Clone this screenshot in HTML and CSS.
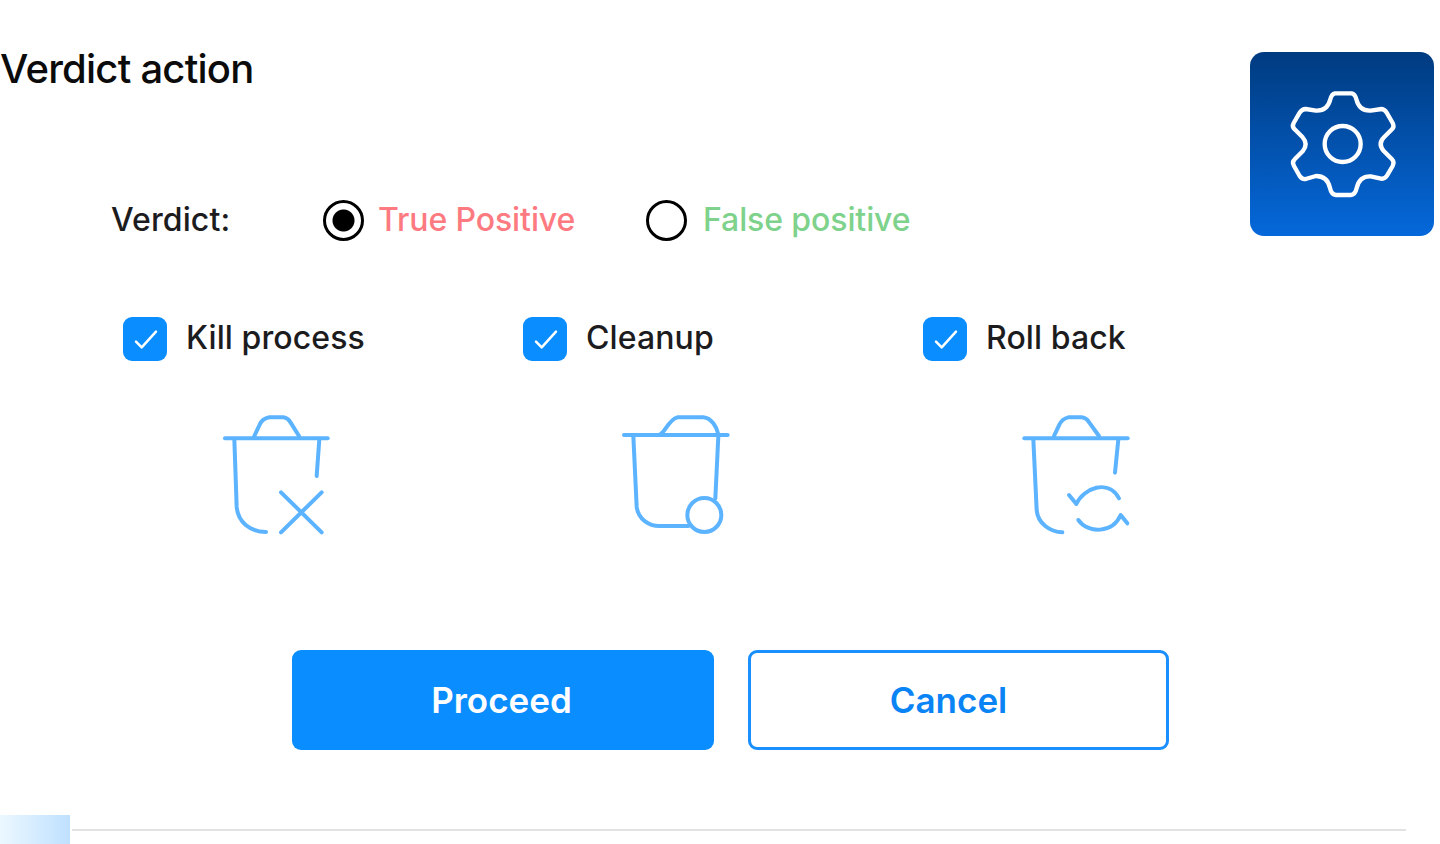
FILE: index.html
```html
<!DOCTYPE html>
<html lang="en">
<head>
    <meta charset="UTF-8">
    <meta name="viewport" content="width=device-width, initial-scale=1.0">
    <title>Verdict action</title>
    <link rel="stylesheet" href="styles.css">
</head>
<body>

<div class="page">
    <h1 class="title">Verdict action</h1>

    <div class="settings-tile">
        <svg class="gear" viewBox="30 36 552 552">
            <path d="M285 160 L335 160 Q345 162 349 178 Q358 214 392 212 L425 207 Q434 208 440 218 L458 249 Q464 260 456 268 L432 292 Q412 312 432 334 L456 358 Q464 366 458 378 L441 407 Q434 418 423 416 L392 409 Q358 408 350 444 Q346 464 332 465 L288 465 Q274 464 270 444 Q262 408 228 408 L197 417 Q186 419 179 408 L162 378 Q155 366 164 358 L188 334 Q206 312 188 292 L164 268 Q155 260 161 249 L179 218 Q186 207 197 207 L228 212 Q262 214 271 178 Q275 162 285 160 Z"/>
            <circle cx="308" cy="312" r="54"/>
        </svg>
    </div>

    <div class="verdict-row">
        <span class="verdict-label">Verdict:</span>
        <span class="radio radio-on"></span>
        <span class="radio-text true-text">True Positive</span>
        <span class="radio"></span>
        <span class="radio-text false-text">False positive</span>
    </div>

    <div class="actions">
        <div class="action">
            <div class="check-row">
                <span class="checkbox">
                    <svg viewBox="0 0 44 44"><path d="M13 24.7 L18.7 30.3 L33 14.7"/></svg>
                </span>
                <span class="check-text">Kill process</span>
            </div>
            <svg class="bin" viewBox="0 0 450 450">
                <path d="M75 115 L383 115"/>
                <path d="M163 108 L178 76 Q186 56 208 52 L250 52 Q264 54 272 68 L297 108"/>
                <path d="M103 118 L110 320 C113 365 150 396 198 396"/>
                <path d="M358 118 L350 228"/>
                <path d="M243 277 L365 397 M365 277 L243 397"/>
            </svg>
        </div>
        <div class="action">
            <div class="check-row">
                <span class="checkbox">
                    <svg viewBox="0 0 44 44"><path d="M13 24.7 L18.7 30.3 L33 14.7"/></svg>
                </span>
                <span class="check-text">Cleanup</span>
            </div>
            <svg class="bin" viewBox="0 0 450 450">
                <path d="M72 105 L383 105"/>
                <path d="M180 103 C195 98 205 60 232 52 L310 52 C335 55 350 80 355 103"/>
                <path d="M100 108 L110 320 C114 358 148 378 178 378 L265 378"/>
                <path d="M355 108 L346 295"/>
                <circle cx="313" cy="345" r="51"/>
            </svg>
        </div>
        <div class="action">
            <div class="check-row">
                <span class="checkbox">
                    <svg viewBox="0 0 44 44"><path d="M13 24.7 L18.7 30.3 L33 14.7"/></svg>
                </span>
                <span class="check-text">Roll back</span>
            </div>
            <svg class="bin" viewBox="0 0 450 450">
                <path d="M73 115 L383 115"/>
                <path d="M162 108 L177 76 Q186 56 205 52 L245 52 Q260 54 268 68 L297 108"/>
                <path d="M100 118 L110 330 C113 370 150 396 187 397"/>
                <path d="M355 118 L345 218"/>
                <path d="M207 285 L229 312 M229 312 C250 265 325 235 357 295"/>
                <path d="M235 360 C265 402 338 400 362 345 L382 370"/>
            </svg>
        </div>
    </div>

    <div class="buttons">
        <button class="btn btn-primary">Proceed</button>
        <button class="btn btn-outline">Cancel</button>
    </div>

    <div class="footer">
        <div class="footer-block"></div>
        <div class="footer-line"></div>
    </div>
</div>

</body>
</html>
```

FILE: styles.css
```css
* {
    box-sizing: border-box;
}
body {
    margin: 0;
    background-color: #fff;
    color: #1c1c1e;
    font-family: Inter, "Noto Sans", sans-serif;
    overflow: hidden;
}
.page {
    position: relative;
    height: 844px;
    display: flex;
    flex-direction: column;
}
.title {
    margin: 0;
    padding-top: 46px;
    height: 189px;
    font-size: 40px;
    line-height: 46px;
    font-weight: 500;
    letter-spacing: -0.77px;
    color: #0b0b0b;
}

.settings-tile {
    position: absolute;
    top: 52px;
    left: 1250px;
    width: 184px;
    height: 184px;
    border-radius: 14px;
    background: linear-gradient(180deg, #003b80 0%, #0568da 100%);
}
.gear {
    display: block;
    width: 184px;
    height: 184px;
    fill: none;
    stroke: #fff;
    stroke-width: 13;
    stroke-linejoin: round;
}

.verdict-row {
    display: flex;
    align-items: center;
    height: 60px;
    padding-left: 111px;
    margin-top: 1px;
}
.verdict-label {
    width: 212px;
    padding-bottom: 2px;
    font-size: 32px;
    font-weight: 500;
    letter-spacing: 0.1px;
}
.radio {
    width: 41px;
    height: 41px;
    flex-shrink: 0;
    border: 3.5px solid #000;
    border-radius: 50%;
    background-color: #fff;
}
.radio-on {
    background: radial-gradient(circle, #000 0, #000 10.5px, #fff 11.5px);
}
.radio-text {
    margin-left: 14px;
    padding-bottom: 2px;
    font-size: 32px;
    font-weight: 500;
    letter-spacing: -0.1px;
}
.true-text {
    color: #fc7a80;
    width: 268px;
}
.false-text {
    color: #7ed28b;
    margin-left: 16px;
}

.actions {
    display: flex;
    padding-left: 123px;
    margin-top: 67px;
}
.action {
    width: 400px;
}
.check-row {
    display: flex;
    align-items: center;
    height: 44px;
}
.checkbox {
    width: 44px;
    height: 44px;
    border-radius: 9px;
    background-color: #0a8dff;
}
.checkbox svg {
    display: block;
    fill: none;
    stroke: #fff;
    stroke-width: 2.5;
    stroke-linecap: round;
    stroke-linejoin: round;
}
.check-text {
    margin-left: 19px;
    padding-bottom: 4px;
    font-size: 32px;
    font-weight: 500;
    letter-spacing: 0.1px;
}
.bin {
    display: block;
    width: 150px;
    height: 150px;
    margin: 39px 0 0 77px;
    fill: none;
    stroke: #5cb3ff;
    stroke-width: 12;
    stroke-linecap: round;
    stroke-linejoin: round;
}

.buttons {
    display: flex;
    gap: 34px;
    margin-top: 100px;
    padding-left: 292px;
}
.btn {
    width: 422px;
    height: 100px;
    border-radius: 9px;
    font-family: inherit;
    font-size: 35px;
    font-weight: 600;
}
.btn-primary {
    padding-right: 9px;
    background-color: #0a8dff;
    border: none;
    color: #fff;
}
.btn-outline {
    width: 421px;
    padding-right: 26px;
    background-color: #fff;
    border: 3px solid #1a8fff;
    color: #0a84f5;
}

.footer {
    display: flex;
    align-items: center;
    height: 29px;
    margin-top: auto;
}
.footer-block {
    width: 70px;
    height: 29px;
    background: linear-gradient(90deg, #ecf8ff 0%, #bfe0ff 100%);
}
.footer-line {
    flex: 1;
    height: 2px;
    margin: 0 34px 0 2px;
    background-color: #e2e2e2;
}
```
